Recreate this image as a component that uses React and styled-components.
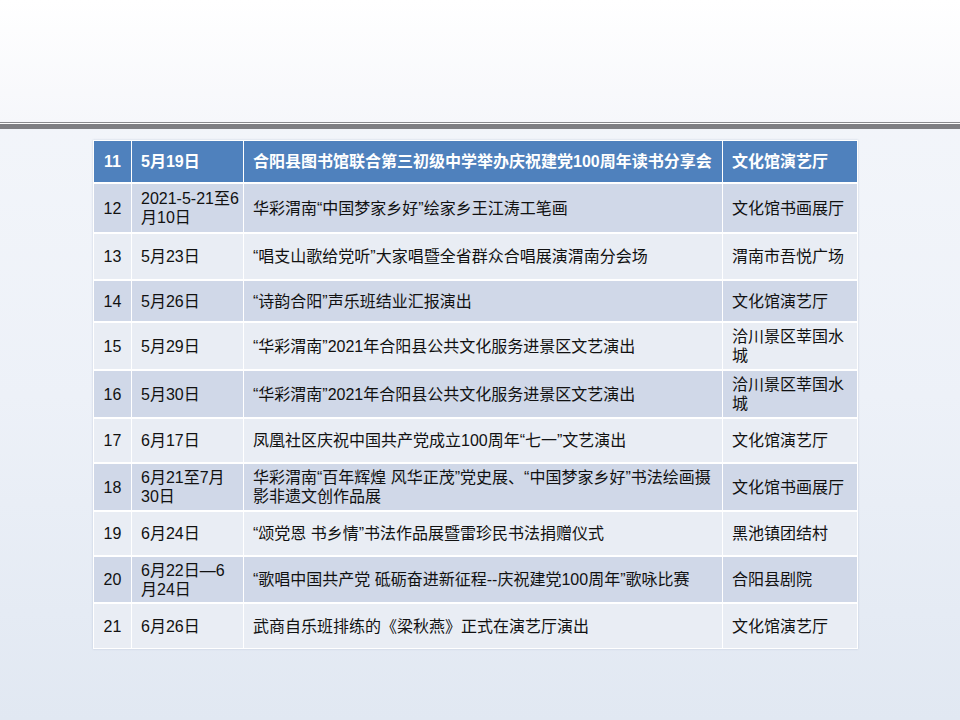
import styled, { createGlobalStyle } from "styled-components";

const GlobalStyle = createGlobalStyle`
  body {
    margin: 0;
    font-family: "Liberation Sans", "Noto Sans CJK SC", sans-serif;
  }
`;

const Page = styled.div`
  width: 960px;
  height: 720px;
  display: flex;
  flex-direction: column;
  background: linear-gradient(to bottom, #f5f7fb 0%, #edf1f8 55%, #e1e8f2 100%);
  overflow: hidden;
`;

const TitleArea = styled.div`
  height: 122px;
  background: linear-gradient(to bottom, #ffffff 0%, #f6f7fb 100%);
`;

const ThinRule = styled.div`
  height: 1px;
  background: #8a8a8e;
`;

const Gap = styled.div`
  height: 1px;
  background: #ffffff;
`;

const ThickRule = styled.div`
  height: 5px;
  background: #7f7f83;
`;

const Content = styled.div`
  padding: 11px 0 0 93px;
`;

const Table = styled.div`
  width: 763px;
  display: flex;
  flex-direction: column;
  gap: 2px;
  padding: 1px;
  background: #ffffff;
  box-shadow: 0 0 2px rgba(120, 140, 170, 0.35);
`;

const Row = styled.div`
  display: grid;
  grid-template-columns: 37px 111px 478px 134px;
  column-gap: 1px;
  height: ${(p) => p.$h}px;
`;

const tones = {
  head: "#4f81bd",
  dark: "#d0d8e8",
  light: "#e9edf4",
};

const Cell = styled.div`
  display: flex;
  align-items: center;
  justify-content: ${(p) => (p.$center ? "center" : "flex-start")};
  padding: 0 ${(p) => (p.$center ? 0 : 9)}px;
  background: ${(p) => tones[p.$tone]};
  color: ${(p) => (p.$tone === "head" ? "#ffffff" : "#111111")};
  font-weight: ${(p) => (p.$tone === "head" ? 700 : 400)};
  font-size: 16px;
  line-height: 19px;
  white-space: nowrap;
`;

const Lines = styled.div`
  display: flex;
  flex-direction: column;
`;

const rows = [
  { no: "11", date: ["5月19日"], event: ["合阳县图书馆联合第三初级中学举办庆祝建党100周年读书分享会"], place: ["文化馆演艺厅"], h: 41 },
  { no: "12", date: ["2021-5-21至6", "月10日"], event: ["华彩渭南“中国梦家乡好”绘家乡王江涛工笔画"], place: ["文化馆书画展厅"], h: 48 },
  { no: "13", date: ["5月23日"], event: ["“唱支山歌给党听”大家唱暨全省群众合唱展演渭南分会场"], place: ["渭南市吾悦广场"], h: 45 },
  { no: "14", date: ["5月26日"], event: ["“诗韵合阳”声乐班结业汇报演出"], place: ["文化馆演艺厅"], h: 40 },
  { no: "15", date: ["5月29日"], event: ["“华彩渭南”2021年合阳县公共文化服务进景区文艺演出"], place: ["洽川景区莘国水", "城"], h: 46 },
  { no: "16", date: ["5月30日"], event: ["“华彩渭南”2021年合阳县公共文化服务进景区文艺演出"], place: ["洽川景区莘国水", "城"], h: 46 },
  { no: "17", date: ["6月17日"], event: ["凤凰社区庆祝中国共产党成立100周年“七一”文艺演出"], place: ["文化馆演艺厅"], h: 43 },
  { no: "18", date: ["6月21至7月", "30日"], event: ["华彩渭南“百年辉煌 风华正茂”党史展、“中国梦家乡好”书法绘画摄", "影非遗文创作品展"], place: ["文化馆书画展厅"], h: 46 },
  { no: "19", date: ["6月24日"], event: ["“颂党恩 书乡情”书法作品展暨雷珍民书法捐赠仪式"], place: ["黑池镇团结村"], h: 43 },
  { no: "20", date: ["6月22日—6", "月24日"], event: ["“歌唱中国共产党 砥砺奋进新征程--庆祝建党100周年”歌咏比赛"], place: ["合阳县剧院"], h: 45 },
  { no: "21", date: ["6月26日"], event: ["武商自乐班排练的《梁秋燕》正式在演艺厅演出"], place: ["文化馆演艺厅"], h: 44 },
];

function Text({ lines }) {
  if (lines.length === 1) return lines[0];
  return (
    <Lines>
      {lines.map((l) => (
        <span key={l}>{l}</span>
      ))}
    </Lines>
  );
}

export default function App() {
  return (
    <>
      <GlobalStyle />
      <Page>
        <TitleArea />
        <ThinRule />
        <Gap />
        <ThickRule />
        <Content>
          <Table>
            {rows.map((r, i) => {
              const tone = i === 0 ? "head" : i % 2 === 1 ? "dark" : "light";
              return (
                <Row key={r.no} $h={r.h}>
                  <Cell $tone={tone} $center>
                    {r.no}
                  </Cell>
                  <Cell $tone={tone}>
                    <Text lines={r.date} />
                  </Cell>
                  <Cell $tone={tone}>
                    <Text lines={r.event} />
                  </Cell>
                  <Cell $tone={tone}>
                    <Text lines={r.place} />
                  </Cell>
                </Row>
              );
            })}
          </Table>
        </Content>
      </Page>
    </>
  );
}
